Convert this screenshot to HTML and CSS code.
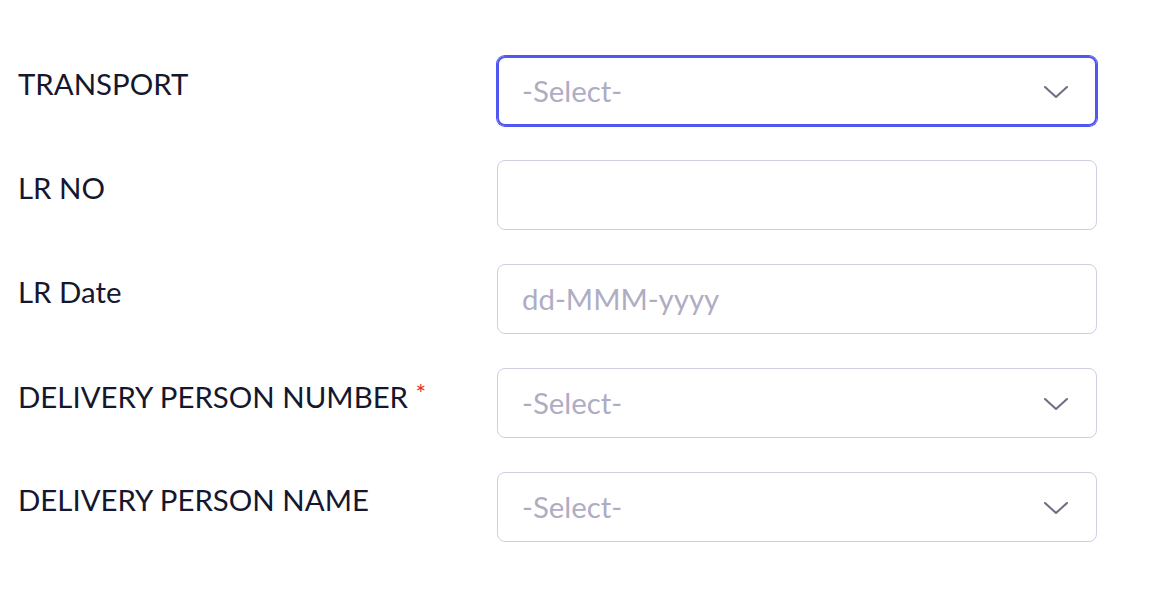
FILE: index.html
```html
<!DOCTYPE html>
<html>
<head>
<meta charset="utf-8">
<link rel="stylesheet" href="styles.css">
</head>
<body>
<form class="form">
  <div class="row">
    <label class="label">TRANSPORT</label>
    <div class="field field-focus">
      <span class="placeholder">-Select-</span>
      <svg class="chev" width="26" height="14" viewBox="0 0 26 14"><path d="M2 2 L13 12 L24 2" fill="none" stroke="#6c6b82" stroke-width="2" stroke-linecap="round" stroke-linejoin="round"/></svg>
    </div>
  </div>
  <div class="row">
    <label class="label">LR NO</label>
    <div class="field"></div>
  </div>
  <div class="row">
    <label class="label">LR Date</label>
    <div class="field"><span class="placeholder">dd-MMM-yyyy</span></div>
  </div>
  <div class="row">
    <label class="label">DELIVERY PERSON NUMBER <span class="req">*</span></label>
    <div class="field">
      <span class="placeholder">-Select-</span>
      <svg class="chev" width="26" height="14" viewBox="0 0 26 14"><path d="M2 2 L13 12 L24 2" fill="none" stroke="#6c6b82" stroke-width="2" stroke-linecap="round" stroke-linejoin="round"/></svg>
    </div>
  </div>
  <div class="row">
    <label class="label">DELIVERY PERSON NAME</label>
    <div class="field">
      <span class="placeholder">-Select-</span>
      <svg class="chev" width="26" height="14" viewBox="0 0 26 14"><path d="M2 2 L13 12 L24 2" fill="none" stroke="#6c6b82" stroke-width="2" stroke-linecap="round" stroke-linejoin="round"/></svg>
    </div>
  </div>
</form>
</body>
</html>
```
FILE: styles.css
```css
html, body {
  margin: 0;
  padding: 0;
  background: #ffffff;
}
body {
  font-family: Lato, "Noto Sans", sans-serif;
}
.form {
  display: flex;
  flex-direction: column;
  gap: 34px;
  padding: 56px 0 0 18px;
}
.row {
  display: grid;
  grid-template-columns: 479px 600px;
  align-items: start;
}
.label {
  font-size: 29.4px;
  line-height: 1.2;
  color: #15172e;
  padding-top: 10px;
  white-space: nowrap;
}
.req {
  color: #e2341f;
  font-size: 25px;
  vertical-align: 5px;
}
.field {
  box-sizing: border-box;
  height: 70px;
  border: 1px solid #d0cee0;
  border-radius: 8px;
  display: flex;
  align-items: center;
  justify-content: space-between;
  padding: 0 27px 0 24px;
}
.field-focus {
  border: 2px solid #5157ef;
  box-shadow: 0 0 0 1px #5157ef;
  padding: 0 26px 0 23px;
}
.placeholder {
  font-size: 29.4px;
  color: #aeadc3;
  margin-top: -1px;
}
.chev {
  display: block;
  margin-top: 2px;
}
```
